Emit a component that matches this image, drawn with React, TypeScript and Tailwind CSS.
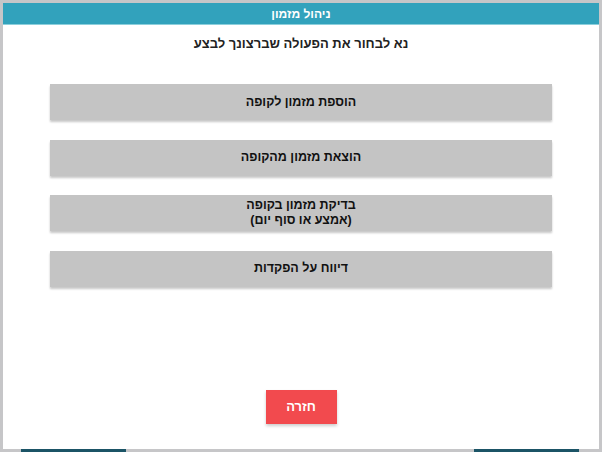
const actions = [
  ['הוספת מזמון לקופה'],
  ['הוצאת מזמון מהקופה'],
  ['בדיקת מזמון בקופה', '(אמצע או סוף יום)'],
  ['דיווח על הפקדות'],
]

const App = () => {
  return (
    <div
      dir="rtl"
      className="flex h-[452px] w-full flex-col bg-[#c6c6c8] pt-[3px]"
      style={{ fontFamily: '"Liberation Sans", "DejaVu Sans", Arial, sans-serif' }}
    >
      <div className="mx-[3px] flex h-[446px] flex-col bg-white">
        <div className="flex h-[22px] items-center justify-center border-b border-[#8ccfdc] bg-[#32a2bc] text-[12px] font-bold text-white">
          ניהול מזמון
        </div>
        <p className="mt-[11px] text-center text-[13px] leading-4 font-bold text-[#222]">
          נא לבחור את הפעולה שברצונך לבצע
        </p>
        <div className="mx-auto mt-[32px] flex w-[502px] flex-col gap-[19.5px]">
          {actions.map((lines) => (
            <button
              key={lines[0]}
              className="flex h-[36px] flex-col items-center justify-center bg-[#c4c4c4] text-[12.5px] leading-[15px] font-bold text-[#111] shadow-[0_2px_2px_rgba(0,0,0,0.22)]"
            >
              {lines.map((line) => (
                <span key={line}>{line}</span>
              ))}
            </button>
          ))}
        </div>
        <button className="mx-auto mt-auto mb-[25px] h-[34px] w-[71px] bg-[#f24a4e] text-[13px] font-semibold text-white shadow-[0_2px_3px_rgba(0,0,0,0.2)]">
          חזרה
        </button>
      </div>
      <div className="flex h-[3px] justify-between pr-[23px] pl-[21px]">
        <div className="w-[105px] bg-[#1b5466]" />
        <div className="w-[105px] bg-[#1b5466]" />
      </div>
    </div>
  )
}

export default App
